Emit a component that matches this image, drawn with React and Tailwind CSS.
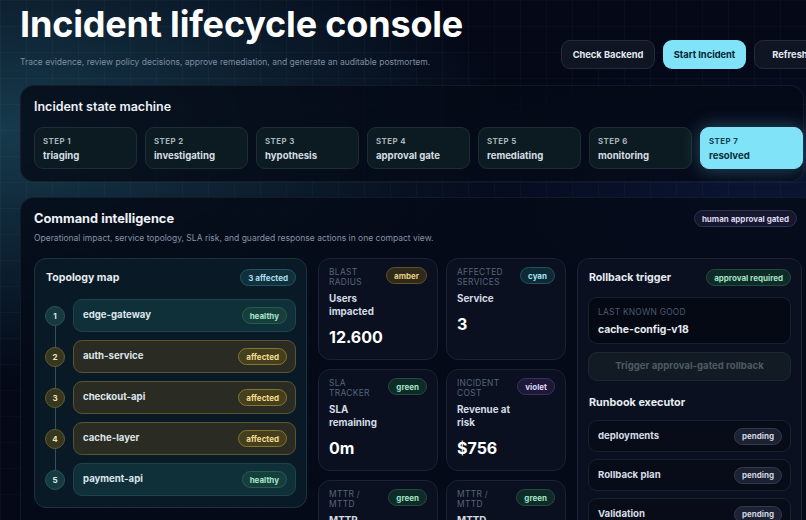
import { useState } from 'react'

const STEPS = ['triaging', 'investigating', 'hypothesis', 'approval gate', 'remediating', 'monitoring', 'resolved']

const NODES = [
  { name: 'edge-gateway', state: 'healthy' },
  { name: 'auth-service', state: 'affected' },
  { name: 'checkout-api', state: 'affected' },
  { name: 'cache-layer', state: 'affected' },
  { name: 'payment-api', state: 'healthy' },
]

const METRICS = [
  { label: 'Blast radius', tone: 'amber', title: 'Users impacted', value: '12.600' },
  { label: 'Affected services', tone: 'cyan', title: 'Service', value: '3' },
  { label: 'SLA tracker', tone: 'green', title: 'SLA remaining', value: '0m' },
  { label: 'Incident cost', tone: 'violet', title: 'Revenue at risk', value: '$756' },
  { label: 'MTTR / MTTD', tone: 'green', title: 'MTTR', value: '14m' },
  { label: 'MTTR / MTTD', tone: 'green', title: 'MTTD', value: '3m' },
]

const RUNBOOK = ['deployments', 'Rollback plan', 'Validation']

const TONES = {
  amber: 'bg-[#2f2a1a] border-[#5e5227] text-[#e9cf86]',
  cyan: 'bg-[#0e2a35] border-[#1d5364] text-[#a3e6f6]',
  green: 'bg-[#0f2b28] border-[#1f4d42] text-[#a2e2c4]',
  violet: 'bg-[#1d1836] border-[#393062] text-[#dcd4f7]',
  healthy: 'bg-[#163f3c] border-[#235d52] text-[#a6e6cc]',
  affected: 'bg-[#453f1e] border-[#85762f] text-[#f2dc8e]',
  teal: 'bg-[#10303c] border-[#1f5566] text-[#a9def0]',
  gray: 'bg-[#1c2234] border-[#323a50] text-[#cfd6e0]',
  indigo: 'bg-[#16162c] border-[#322f55] text-[#dcd8f2]',
}

function Badge({ tone, children }) {
  return (
    <span className={`shrink-0 flex items-center h-[17px] px-[7px] rounded-full border text-[8px] font-bold leading-none whitespace-nowrap ${TONES[tone]}`}>
      {children}
    </span>
  )
}

export default function App() {
  const [step] = useState(6)

  return (
    <div className="relative w-[806px] h-[520px] overflow-hidden font-['Inter',sans-serif] text-white bg-[#040817] bg-[linear-gradient(rgba(255,255,255,0.025)_1px,transparent_1px),linear-gradient(90deg,rgba(255,255,255,0.025)_1px,transparent_1px),radial-gradient(ellipse_at_0%_25%,rgba(38,100,120,0.55),transparent_45%),radial-gradient(ellipse_at_95%_40%,rgba(30,60,130,0.28),transparent_35%)] bg-[size:26px_26px,26px_26px,100%_100%,100%_100%]">
      <div className="w-[840px] pl-[20px]">
        {/* header */}
        <div className="h-[69px] pr-[14px] flex justify-between">
          <div className="pt-[6px]">
            <h1 className="text-[36px] leading-none font-bold tracking-[-0.005em] text-white">Incident lifecycle console</h1>
            <p className="mt-[14px] text-[8.5px] leading-[13px] text-[#7f8da0]">
              Trace evidence, review policy decisions, approve remediation, and generate an auditable postmortem.
            </p>
          </div>
          <div className="flex gap-[8px] pt-[40px]">
            <button className="h-[29px] w-[94px] rounded-[9px] border border-[#222b3c] bg-[#0f1523] text-[9.3px] font-bold text-[#e3e8ef]">Check Backend</button>
            <button className="h-[29px] w-[83px] rounded-[9px] bg-[#80e3f8] text-[9.3px] font-bold text-[#072331]">Start Incident</button>
            <button className="h-[29px] w-[72px] rounded-[9px] border border-[#222b3c] bg-[#0f1523] text-[9.3px] font-bold text-[#e3e8ef]">Refresh</button>
          </div>
        </div>

        {/* state machine */}
        <section className="mt-[16px] w-[784px] h-[97px] rounded-[14px] border border-white/[0.06] bg-[#050a17]/80 pl-[13px] pt-[13px]">
          <h2 className="text-[12.5px] leading-[16px] font-semibold text-[#eef2f6]">Incident state machine</h2>
          <div className="mt-[12px] flex gap-[8px]">
            {STEPS.map((s, i) => (
              <div key={s}
                className={`w-[103px] h-[42px] shrink-0 rounded-[9px] border px-[8px] pt-[8px] ${i === step ? 'bg-[#80e3f8] border-[#80e3f8] shadow-[0_0_18px_rgba(110,210,250,0.35)]' : 'bg-[#0c1b22] border-[#1c2e33]'}`}>
                <div className={`text-[7.8px] leading-[10px] font-bold tracking-[0.06em] ${i === step ? 'text-[#12404f]' : 'text-[#a9b5bd]'}`}>STEP {i + 1}</div>
                <div className={`mt-[4px] text-[9.6px] leading-[12px] font-bold ${i === step ? 'text-[#0b2c38]' : 'text-[#d5dee3]'}`}>{s}</div>
              </div>
            ))}
          </div>
        </section>

        {/* command intelligence */}
        <section className="mt-[15px] w-[796px] rounded-[14px] border border-white/[0.06] bg-[#050a17]/85 px-[13px] pt-[12px] pb-[14px]">
          <div className="flex justify-between items-start">
            <div>
              <h2 className="text-[12.8px] leading-[18px] font-bold text-[#eef2f6]">Command intelligence</h2>
              <p className="mt-[4px] text-[8.5px] leading-[13px] text-[#8593a6]">Operational impact, service topology, SLA risk, and guarded response actions in one compact view.</p>
            </div>
            <div className="mt-[0px] mr-[5px] flex"><Badge tone="indigo">human approval gated</Badge></div>
          </div>

          <div className="mt-[13px] flex items-start gap-[11px]">
            {/* topology */}
            <div className="w-[273px] shrink-0 rounded-[12px] border border-[#1b3340] bg-[#0b1b28]/90 px-[10px] pt-[10px] pb-[11px]">
              <div className="flex items-center justify-between">
                <h3 className="pl-[1px] text-[10.6px] font-bold text-[#e6ecf0]">Topology map</h3>
                <Badge tone="teal">3 affected</Badge>
              </div>
              <div className="relative mt-[13px] flex flex-col gap-[8px]">
                <div className="absolute left-[10px] top-[16px] bottom-[16px] w-px bg-[#33505c]" />
                {NODES.map((n, i) => (
                  <div key={n.name} className="relative flex items-center gap-[8px]">
                    <div className={`w-[20px] h-[20px] rounded-full border flex items-center justify-center text-[8px] font-bold ${n.state === 'healthy' ? 'bg-[#153a40] border-[#24545a] text-[#d6ecef]' : 'bg-[#37361f] border-[#625c2c] text-[#eee3b5]'}`}>{i + 1}</div>
                    <div className={`flex-1 h-[33px] rounded-[9px] border flex items-center justify-between pl-[9px] pr-[8px] ${n.state === 'healthy' ? 'bg-[#103039] border-[#1d4549]' : 'bg-[#2a2b22] border-[#5a5530]'}`}>
                      <span className="text-[9.6px] font-bold text-[#dde5ea]">{n.name}</span>
                      <Badge tone={n.state}>{n.state}</Badge>
                    </div>
                  </div>
                ))}
              </div>
            </div>

            {/* metrics */}
            <div className="w-[248px] shrink-0 grid grid-cols-2 gap-x-[8px] gap-y-[9px]">
              {METRICS.map((m, i) => (
                <div key={i} className="rounded-[12px] border border-[#1a2233] bg-[#0a1020] pl-[10px] pr-[10px] pt-[8px] pb-[12px]">
                  <div className="flex justify-between items-start">
                    <div className="w-[52px] text-[8.4px] leading-[10px] uppercase tracking-[0.04em] text-[#586579]">{m.label}</div>
                    <Badge tone={m.tone}>{m.tone}</Badge>
                  </div>
                  <div className="mt-[5px] w-[58px] text-[9.8px] leading-[13px] font-bold text-[#d3dbe4]">{m.title}</div>
                  <div className="mt-[9px] text-[16px] leading-[20px] font-bold text-white">{m.value}</div>
                </div>
              ))}
            </div>

            {/* rollback */}
            <div className="w-[225px] shrink-0 rounded-[12px] border border-[#1b2334] bg-[#0a101f] px-[10px] pt-[10px] pb-[10px]">
              <div className="flex items-center justify-between">
                <h3 className="pl-[1px] text-[10.6px] font-bold text-[#e6ecf0]">Rollback trigger</h3>
                <Badge tone="green">approval required</Badge>
              </div>
              <div className="mt-[11px] h-[47px] rounded-[9px] border border-[#19202f] bg-[#050914] px-[9px] pt-[9px]">
                <div className="text-[8.4px] leading-[10px] uppercase tracking-[0.03em] text-[#4e596b]">Last known good</div>
                <div className="mt-[6px] text-[10.4px] leading-[13px] font-bold text-[#e6eaf0]">cache-config-v18</div>
              </div>
              <button className="mt-[8px] w-full h-[29px] rounded-[9px] border border-[#1c2830] bg-[#121b23] text-[9.6px] font-bold text-[#4d5a65]">Trigger approval-gated rollback</button>
              <h3 className="mt-[15px] pl-[1px] text-[10.8px] leading-[14px] font-bold text-[#e6ecf0]">Runbook executor</h3>
              <div className="mt-[10px] flex flex-col gap-[7px]">
                {RUNBOOK.map(r => (
                  <div key={r} className="h-[32px] rounded-[9px] border border-[#19202f] bg-[#070c18] flex items-center justify-between pl-[9px] pr-[8px]">
                    <span className="text-[9.6px] font-bold text-[#d7dee6]">{r}</span>
                    <Badge tone="gray">pending</Badge>
                  </div>
                ))}
              </div>
            </div>
          </div>
        </section>
      </div>
    </div>
  )
}
